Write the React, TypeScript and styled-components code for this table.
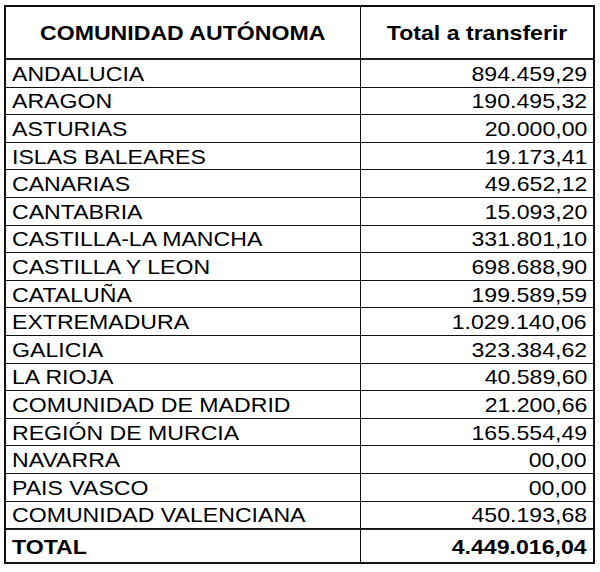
import React from 'react';
import styled, { createGlobalStyle } from 'styled-components';

type Row = { name: string; amount: string };

const rows: Row[] = [
  { name: 'ANDALUCIA', amount: '894.459,29' },
  { name: 'ARAGON', amount: '190.495,32' },
  { name: 'ASTURIAS', amount: '20.000,00' },
  { name: 'ISLAS BALEARES', amount: '19.173,41' },
  { name: 'CANARIAS', amount: '49.652,12' },
  { name: 'CANTABRIA', amount: '15.093,20' },
  { name: 'CASTILLA-LA MANCHA', amount: '331.801,10' },
  { name: 'CASTILLA Y LEON', amount: '698.688,90' },
  { name: 'CATALUÑA', amount: '199.589,59' },
  { name: 'EXTREMADURA', amount: '1.029.140,06' },
  { name: 'GALICIA', amount: '323.384,62' },
  { name: 'LA RIOJA', amount: '40.589,60' },
  { name: 'COMUNIDAD DE MADRID', amount: '21.200,66' },
  { name: 'REGIÓN DE MURCIA', amount: '165.554,49' },
  { name: 'NAVARRA', amount: '00,00' },
  { name: 'PAIS VASCO', amount: '00,00' },
  { name: 'COMUNIDAD VALENCIANA', amount: '450.193,68' },
];

const GlobalStyle = createGlobalStyle`
  html, body {
    margin: 0;
    padding: 0;
    background: #fff;
  }
  body {
    font-family: 'Liberation Sans', Arial, sans-serif;
    color: #000;
  }
`;

const Page = styled.div`
  padding: 5px 5px 0 4px;
`;

const Sheet = styled.div`
  width: 591px;
  box-sizing: border-box;
  border: 2px solid #111;
  display: grid;
  grid-template-columns: 355px 1fr;
  grid-template-rows: 53px repeat(17, 27.6px) 33px;
`;

type Align = 'left' | 'right' | 'center';

const Cell = styled.div<{ $align: Align; $kind?: 'head' | 'row' | 'total' }>`
  box-sizing: border-box;
  display: flex;
  align-items: center;
  justify-content: ${({ $align }) =>
    $align === 'left' ? 'flex-start' : $align === 'right' ? 'flex-end' : 'center'};
  padding: 0 6px;
  overflow: hidden;
  white-space: nowrap;
  border-bottom: ${({ $kind }) =>
    $kind === 'head' ? '2px solid #222' : $kind === 'total' ? 'none' : '1px solid #111'};
  border-top: ${({ $kind }) => ($kind === 'total' ? '1px solid #222' : 'none')};
  font-size: 21px;
  font-weight: ${({ $kind }) => ($kind === 'row' ? 400 : 700)};
  line-height: 1;

  &:nth-child(odd) {
    border-right: 1px solid #111;
  }
`;

const Text = styled.span<{ $align: Align }>`
  display: inline-block;
  transform: scaleX(1.1);
  transform-origin: ${({ $align }) => $align} center;
`;

const App: React.FC = () => (
  <>
    <GlobalStyle />
    <Page>
      <Sheet>
        <Cell $align="center" $kind="head">
          <Text $align="center">COMUNIDAD AUTÓNOMA</Text>
        </Cell>
        <Cell $align="center" $kind="head">
          <Text $align="center">Total a transferir</Text>
        </Cell>
        {rows.map((r) => (
          <React.Fragment key={r.name}>
            <Cell $align="left" $kind="row">
              <Text $align="left">{r.name}</Text>
            </Cell>
            <Cell $align="right" $kind="row">
              <Text $align="right">{r.amount}</Text>
            </Cell>
          </React.Fragment>
        ))}
        <Cell $align="left" $kind="total">
          <Text $align="left">TOTAL</Text>
        </Cell>
        <Cell $align="right" $kind="total">
          <Text $align="right">4.449.016,04</Text>
        </Cell>
      </Sheet>
    </Page>
  </>
);

export default App;
